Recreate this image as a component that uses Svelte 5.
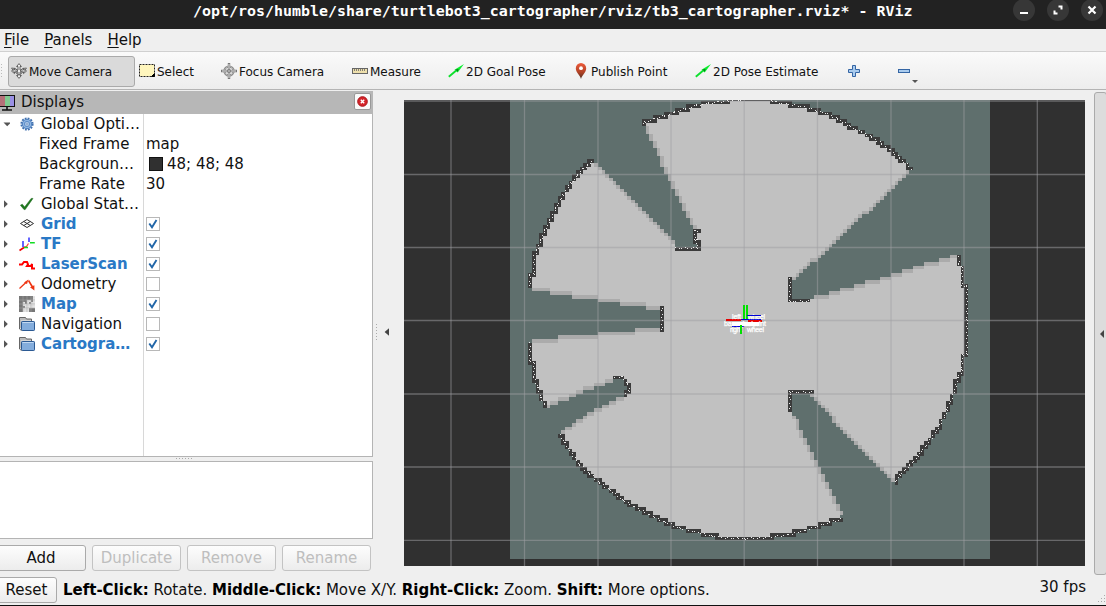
<script>
  const CELL = 3.664;
  const MX = 510, MB = 558.7, VX = 404, VY = 100;

  // Outline of the scanned area: alternating obstacle walls and open sight lines.
  const segs = [
    ['wall', [[644,124],[645,121.5],[654,119],[665,115.5],[675,112],[686,108.5],[697,105],[709,103],[718,102],[735,100],[750,99],[768,99.5],[776,102],[795,105],[812,109],[828,114],[838,119],[850,126],[862,132],[872,137],[882,144],[890,150],[900,158],[911,168.5]]],
    ['edge', [[908,171],[893,187],[862,214],[827,248],[795,279]]],
    ['wall', [[790,279],[790,300.5],[809,300.5]]],
    ['edge', [[815,298],[862,285],[905,272],[956,257]]],
    ['wall', [[958.5,257],[958.7,264],[962,267],[962,286],[966.5,286],[966.5,320],[966.5,354],[962.5,355],[962,370],[958,378],[953,395],[947,410],[940,425],[930,440],[918,456],[910,465],[900,475],[895,482]]],
    ['edge', [[892,480],[860,448],[812,396]]],
    ['wall', [[812,391.5],[790,391.5],[790,409]]],
    ['edge', [[794,416],[812,456],[841,514]]],
    ['wall', [[841,519],[830,522],[812,528],[795,533],[778,536],[760,538],[745,538.5],[728,538],[712,536],[695,531.5],[680,528],[665,522],[650,515],[635,507],[623,500],[610,490],[600,483],[590,474],[580,465],[570,451],[565,443],[560,435]]],
    ['edge', [[563,432],[590,415],[624,396]]],
    ['wall', [[626,394],[629,391],[628,384],[622,377],[615,377]]],
    ['edge', [[610,381],[583,391],[547,406]]],
    ['wall', [[545,405],[541,398],[538,388],[534,377],[534,363],[530,361],[530,343]]],
    ['edge', [[533,341],[590,336],[658,329]]],
    ['wall', [[662,330],[662,308]]],
    ['edge', [[658,308],[600,299],[532,289]]],
    ['wall', [[530,286],[530,275],[534,274],[534,256],[537,250],[541,240],[545,230],[550,220],[556,208],[563,195],[571,183],[578,175],[583,169],[588,165],[592,161]]],
    ['edge', [[595,163],[630,197],[673,243]]],
    ['wall', [[676,248],[697,248],[697,240],[695,240],[695,231],[697,231]]],
    ['edge', [[695,226],[671,178],[646,128]]],
  ];

  const outline = segs.flatMap((s) => s[1]);
  const cells = new Map();
  const dots = [];

  function inside(x, y) {
    let hit = false;
    for (let i = 0, j = outline.length - 1; i < outline.length; j = i++) {
      const [xi, yi] = outline[i], [xj, yj] = outline[j];
      if (yi > y !== yj > y && x < ((xj - xi) * (y - yi)) / (yj - yi) + xi) hit = !hit;
    }
    return hit;
  }
  for (let r = 0; r < 126; r++)
    for (let c = 0; c < 131; c++)
      if (inside(MX + (c + 0.5) * CELL, MB - (r + 0.5) * CELL)) cells.set(r * 200 + c, 'f');

  function trace(points, step, visit) {
    for (let i = 0; i < points.length - 1; i++) {
      const [x0, y0] = points[i], [x1, y1] = points[i + 1];
      const n = Math.max(1, Math.round(Math.hypot(x1 - x0, y1 - y0) / step));
      for (let k = 0; k <= n; k++) visit(x0 + ((x1 - x0) * k) / n, y0 + ((y1 - y0) * k) / n, k);
    }
  }
  const keyOf = (x, y) => Math.floor((MB - y) / CELL) * 200 + Math.floor((x - MX) / CELL);

  // One cell per column (or row) along the longer axis keeps the sight lines thin.
  function thin(points) {
    for (let i = 0; i < points.length - 1; i++) {
      const [ax, ay] = points[i], [bx, by] = points[i + 1];
      const c0 = (ax - MX) / CELL - 0.5, r0 = (MB - ay) / CELL - 0.5;
      const c1 = (bx - MX) / CELL - 0.5, r1 = (MB - by) / CELL - 0.5;
      const n = Math.max(Math.abs(Math.round(c1) - Math.round(c0)), Math.abs(Math.round(r1) - Math.round(r0)), 1);
      for (let k = 0; k <= n; k++)
        cells.set(Math.round(r0 + ((r1 - r0) * k) / n) * 200 + Math.round(c0 + ((c1 - c0) * k) / n), 'e');
    }
  }
  for (const [kind, pts] of segs) if (kind === 'edge') thin(pts);
  for (const [kind, pts] of segs)
    if (kind === 'wall') {
      trace(pts, 0.8, (x, y) => cells.set(keyOf(x, y), 'w'));
      trace(pts, 3, (x, y, k) => dots.push([Math.round(x) - VX + (k % 2 ? 0 : -1), Math.round(y) - VY - (k % 3 ? 0 : 1)]));
    }

  const paths = { f: '', e: '', w: '' };
  for (let r = 0; r < 126; r++) {
    let c = 0;
    while (c < 131) {
      const v = cells.get(r * 200 + c);
      let e = c + 1;
      while (e < 131 && cells.get(r * 200 + e) === v) e++;
      if (v) {
        const x0 = Math.round(MX + c * CELL) - VX, x1 = Math.round(MX + e * CELL) - VX;
        const y0 = Math.round(MB - (r + 1) * CELL) - VY, y1 = Math.round(MB - r * CELL) - VY;
        paths[v] += `M${x0} ${y0}H${x1}V${y1}H${x0}Z`;
      }
      c = e;
    }
  }
  const dotPath = dots.map(([x, y]) => `M${x} ${y}h1v1h-1z`).join('');
  const gx = [47, 120.5, 194, 267, 340.2, 413.5, 487, 560, 633.3];
  const gy = [1, 74.5, 147.5, 220.5, 294, 367, 440.3];

  const rows = [
    { icon: 'gear', name: 'Global Opti…', arrow: 'down' },
    { sub: true, name: 'Fixed Frame', value: 'map' },
    { sub: true, name: 'Backgroun…', value: '48; 48; 48', swatch: true },
    { sub: true, name: 'Frame Rate', value: '30' },
    { icon: 'check', name: 'Global Stat…', arrow: 'right' },
    { icon: 'grid', name: 'Grid', arrow: 'right', on: true, box: true },
    { icon: 'tf', name: 'TF', arrow: 'right', on: true, box: true },
    { icon: 'laser', name: 'LaserScan', arrow: 'right', on: true, box: true },
    { icon: 'odom', name: 'Odometry', arrow: 'right', box: true },
    { icon: 'map', name: 'Map', arrow: 'right', on: true, box: true },
    { icon: 'folder', name: 'Navigation', arrow: 'right', box: true },
    { icon: 'folder', name: 'Cartogra…', arrow: 'right', on: true, box: true },
  ];
  const tools = [
    { icon: 'move', label: 'Move Camera', w: 127, active: true },
    { icon: 'select', label: 'Select', w: 82 },
    { icon: 'focus', label: 'Focus Camera', w: 131 },
    { icon: 'measure', label: 'Measure', w: 96 },
    { icon: 'pose', label: '2D Goal Pose', w: 125 },
    { icon: 'pin', label: 'Publish Point', w: 122 },
    { icon: 'pose', label: '2D Pose Estimate', w: 149 },
  ];
  const mapLight = [
    '.......1', '.......1', '....11.1', '..1.1.11', '..111111', '...11111', '..111...', '..111...',
  ];
</script>

{#snippet glyph(name)}
  <svg class="ico" width="16" height="16" viewBox="0 0 16 16">
    {#if name === 'gear'}
      <circle cx="8" cy="8" r="5.6" fill="none" stroke="#3f6fae" stroke-width="2" stroke-dasharray="1.8 1.13" />
      <circle cx="8" cy="8" r="4.7" fill="#8db5e3" stroke="#4d7fbe" stroke-width="1" />
      <circle cx="8" cy="8" r="2.6" fill="#b9d2ee" stroke="#4d7fbe" stroke-width=".8" />
      <circle cx="8" cy="8" r="1" fill="#fff" stroke="#3f6fae" stroke-width=".6" />
    {:else if name === 'check'}
      <path d="M1.4 9.2 3.3 8.2 5.6 11 12.2 2.4 14 2.4 6.2 13.6H5Z" fill="#1d7a1d" stroke="#175e17" stroke-width=".5" />
    {:else if name === 'grid'}
      <path d="M1.5 7.5 8 3.5 14.5 7.5 8 11.5ZM4.8 5.5 11.3 9.5M11.3 5.5 4.8 9.5" fill="none" stroke="#333" stroke-width="1" />
    {:else if name === 'tf'}
      <path d="M.5 14.5 5 11.5" stroke="#e00" stroke-width="1.6" />
      <path d="M5 11 7.5 10.5 9.5 7.5" stroke="#f33" stroke-width="1.2" fill="none" />
      <path d="M4 5V11M10 1.5V6" stroke="#22f" stroke-width="1.4" />
      <path d="M5 11.5H9M11 6.8H15.8" stroke="#1d2" stroke-width="1.4" />
    {:else if name === 'laser'}
      <path d="M0 8.5H3L5 6H8L9 8.5 8 10H12L13 8V12.5H16" fill="none" stroke="#f00" stroke-width="2" />
    {:else if name === 'odom'}
      <path d="M.5 12.5 8 5.5" stroke="#e31" stroke-width="1.3" /><path d="M5 6.4 9.4 3.6 8 8Z" fill="#e31" />
      <path d="M9.5 4.5 13.5 11" stroke="#e31" stroke-width="1.6" /><path d="M11 11.2 15.4 9.2V14.4Z" fill="#e31" />
    {:else if name === 'map'}
      <rect width="16" height="16" fill="#777" />
      {#each mapLight as line, y}
        {#each line.split('') as m, x}
          {#if m === '1'}<rect x={x * 2} y={y * 2} width="2" height="2" fill="#f4f4f4" stroke="#bbb" stroke-width=".3" />{/if}
        {/each}
      {/each}
      <path d="M4 0V16M8 0V16M12 0V16M0 4H16M0 8H16M0 12H16" stroke="#aaa" stroke-width=".5" />
    {:else if name === 'folder'}
      <path d="M.5 13V1.5H6.5L7.5 3H12.5V6" fill="#bbb" stroke="#666" />
      <path d="M2 5H12" stroke="#eee" />
      <rect x="2.5" y="5.5" width="13" height="9" rx=".7" fill="#84addc" stroke="#2c5a93" />
      <path d="M3.5 6.5H14.5" stroke="#c1d8f1" /><path d="M.5 13 2.5 14.5" stroke="#666" />
    {:else if name === 'move'}
      <path d="M8 .6 10.4 3.5H9V7H12.5V5.4L15.5 8 12.5 10.6V9H9V12.5H10.4L8 15.4 5.6 12.5H7V9H3.5V10.6L.5 8 3.5 5.4V7H7V3.5H5.6Z" fill="#eee" stroke="#555" stroke-width=".9" />
      <path d="M.5 5 4.5 5.5 7 8 3.5 9.5ZM15.5 5 11.5 5.5 9 8 12.5 9.5ZM5 10 8 12 11 10" fill="none" stroke="#555" stroke-width=".8" />
    {:else if name === 'focus'}
      <circle cx="8" cy="8" r="4.6" fill="none" stroke="#777" stroke-width="2" />
      <circle cx="8" cy="8" r="4.6" fill="none" stroke="#eee" stroke-width=".6" />
      <path d="M8 0V16M0 8H16" stroke="#777" stroke-width="2.4" /><path d="M8 1V15M1 8H15" stroke="#eee" stroke-width=".9" />
      <circle cx="8" cy="8" r="1.5" fill="#bbb" stroke="#666" stroke-width=".7" />
    {:else if name === 'select'}
      <rect x=".5" y="1.5" width="15" height="12" fill="#fff6bd" stroke="#222" stroke-dasharray="2 1" /><path d="M15.5 10.5V13.5H12.5Z" fill="#000" stroke="#000" />
    {:else if name === 'measure'}
      <rect x=".5" y="5.5" width="15" height="5" fill="#eee0ad" stroke="#666" /><path d="M2.5 6V8M4.5 6V8M6.5 6V8M8.5 6V8M10.5 6V8M12.5 6V8" stroke="#666" stroke-width=".8" />
    {:else if name === 'pose'}
      <path d="M.8 13.8 8.5 7.2" stroke="#0de02d" stroke-width="1.9" /><path d="M6.5 6.8 16 1 9.7 9.5Z" fill="#0bee2e" /><path d="M7.5 6.6 9.7 8.8 10.6 6Z" fill="#087d1a" />
    {:else if name === 'pin'}
      <defs><linearGradient id="pin" x1="0" y1="0" x2="0" y2="1"><stop offset="0" stop-color="#ee5b3b" /><stop offset=".6" stop-color="#ae4125" /><stop offset="1" stop-color="#4b3023" /></linearGradient></defs>
      <path d="M8 16C7 12 2.8 9.5 2.8 5.2A5.2 5.2 0 0 1 13.2 5.2C13.2 9.5 9 12 8 16Z" fill="url(#pin)" /><circle cx="8" cy="5.2" r="1.9" fill="#fff" />
    {/if}
  </svg>
{/snippet}

<div class="window">
  <header>
    <span class="title">/opt/ros/humble/share/turtlebot3_cartographer/rviz/tb3_cartographer.rviz* - RViz</span>
    <div class="winbtns">
      <i><svg width="22" height="22"><path d="M7 14H15" stroke="#fff" stroke-width="2" /></svg></i>
      <i><svg width="22" height="22"><path d="M11.5 7.5H14.5V10.5M10.5 14.5H7.5V11.5" stroke="#fff" stroke-width="2" fill="none" /></svg></i>
      <i><svg width="22" height="22"><path d="M7.5 7.5 14.5 14.5M14.5 7.5 7.5 14.5" stroke="#fff" stroke-width="2.2" /></svg></i>
    </div>
  </header>
  <nav><span><u>F</u>ile</span><span><u>P</u>anels</span><span><u>H</u>elp</span></nav>
  <div class="toolbar">
    <span class="grip"></span>
    {#each tools as t}
      <div class="tool" class:active={t.active} style="width:{t.w}px">{@render glyph(t.icon)}<span>{t.label}</span></div>
    {/each}
    <div class="pm">
      <svg width="12" height="12" viewBox="0 0 12 12"><path d="M4.5 .5H7.5V4.5H11.5V7.5H7.5V11.5H4.5V7.5H.5V4.5H4.5Z" fill="#a9cbee" stroke="#3465a4" /></svg>
      <svg width="22" height="24" viewBox="0 0 22 24"><rect x=".5" y="10.5" width="11" height="3" fill="#a9cbee" stroke="#3465a4" /><path d="M14 21H20L17 24Z" fill="#555" /></svg>
    </div>
  </div>

  <main>
    <aside>
      <div class="dockhead">
        <svg width="16" height="18" viewBox="0 0 16 18"><rect x="-2" y="2" width="17" height="12" fill="#111" /><rect x="-1" y="3" width="6" height="10" fill="#b57078" /><rect x="5" y="3" width="5" height="10" fill="#80c990" /><rect x="10" y="3" width="4" height="10" fill="#9a90e4" /><path d="M7 14V17M2 17H12" stroke="#111" stroke-width="1.6" /></svg>
        <span>Displays</span>
        <b class="close"><svg width="15" height="15"><circle cx="7.5" cy="7.5" r="4.8" fill="#d5242a" stroke="#a91218" /><path d="M5.8 5.8 9.2 9.2M9.2 5.8 5.8 9.2" stroke="#fff" stroke-width="1.4" /></svg></b>
      </div>
      <div class="tree">
        {#each rows as r}
          <div class="row">
            <div class="key" class:sub={r.sub} class:on={r.on}>
              {#if !r.sub}
                <svg class="arr" width="8" height="10">
                  {#if r.arrow === 'down'}<path d="M1.5 3.5H9L5.2 7.3Z" fill="#555" />{:else}<path d="M2 1.2V8.8L5.8 5Z" fill="#555" />{/if}
                </svg>
                {@render glyph(r.icon)}
              {/if}
              <span>{r.name}</span>
            </div>
            <div class="val">
              {#if r.box}<svg width="14" height="14"><rect x=".5" y=".5" width="13" height="13" fill="#fff" stroke="#b8b8b8" />{#if r.on}<path d="M3.3 6.5 6 10.2 10.5 3" fill="none" stroke="#2166a8" stroke-width="1.9" />{/if}</svg>{/if}
              {#if r.swatch}<i class="sw"></i>{/if}
              {#if r.value}<span>{r.value}</span>{/if}
            </div>
          </div>
        {/each}
      </div>
      <div class="split"></div>
      <div class="desc"></div>
      <div class="btns">
        <button class="add">Add</button><button disabled>Duplicate</button><button disabled>Remove</button><button disabled>Rename</button>
      </div>
    </aside>
    <div class="handle"><svg width="18" height="18"><path d="M1.5 1V18" stroke="#aaa" stroke-dasharray="1 2" /><path d="M14 5.2V12.8L9.6 9Z" fill="#444" /></svg></div>
    <svg class="view" width="681" height="466" viewBox="0 0 681 466" shape-rendering="crispEdges">
      <rect width="681" height="466" fill="#303030" />
      <rect x="106" y="0" width="480" height="459" fill="#5f6f6d" />
      <path d={paths.f} fill="#c1c1c1" />
      <path d={paths.e} fill="#ababab" />
      <path d={paths.w} fill="#3b3b3b" />
      <g stroke="#a0a0a4" stroke-opacity=".5" stroke-width="1.3" shape-rendering="auto">
        {#each gx as x}<path d="M{x} 0V466" />{/each}
        {#each gy as y}<path d="M0 {y}H681" />{/each}
      </g>
      <path d={dotPath} fill="#ececec" />
      <g fill="none">
        <path d="M322 219.5H337M344 220.5H358" stroke="#e60000" stroke-width="2" />
        <path d="M343 215.5H357M337 219.5H357M328 226.5H340" stroke="#0000d8" stroke-width="1.5" />
        <path d="M340 205V219M343 205V219" stroke="#00e000" stroke-width="2" />
        <path d="M328 224H355" stroke="#fff" stroke-width="4" />
      </g>
      <g class="labels" shape-rendering="auto">
        <text x="328" y="219" textLength="9">left</text><text x="344" y="219" textLength="17">wheel</text>
        <text x="320" y="226" textLength="42">base_footprint</text>
        <text x="326" y="232" textLength="12">right</text><text x="343" y="232" textLength="17">wheel</text>
      </g>
      <path d="M343 215.5H357" stroke="#0000d8" stroke-width="1.2" />
      <path d="M336.5 225V234" stroke="#00e000" stroke-width="2" />
    </svg>
    <div class="right"><svg width="8" height="12"><path d="M6 2V10L2 6Z" fill="#444" /></svg></div>
  </main>

  <footer>
    <button class="reset">Reset</button>
    <p><b>Left-Click:</b> Rotate. <b>Middle-Click:</b> Move X/Y. <b>Right-Click:</b> Zoom. <b>Shift:</b> More options.</p>
    <span class="fps">30 fps</span>
    <svg class="size" width="8" height="8"><path d="M6 0h1v1h-1zM3 3h1v1h-1zM6 3h1v1h-1zM0 6h1v1h-1zM3 6h1v1h-1zM6 6h1v1h-1z" fill="#aaa" /></svg>
  </footer>
</div>

<style>
  .window { width: 1106px; height: 606px; box-sizing: border-box; display: flex; flex-direction: column; overflow: hidden; background: #efefef; color: #111; font: 15px/20px "DejaVu Sans", sans-serif; border-bottom: 1px solid #111; }
  svg { display: block; flex: none; }
  header { height: 29px; flex: none; display: flex; background: #222; color: #fff; box-sizing: border-box; padding-left: 193px; }
  .title { width: 820px; font: bold 14.95px/22px "DejaVu Sans Mono", monospace; white-space: pre; }
  .winbtns { display: flex; gap: 12px; }
  .winbtns i { width: 22px; height: 22px; margin-top: -1px; border-radius: 50%; background: #373737; }
  nav { height: 22px; flex: none; display: flex; gap: 15px; padding-left: 4px; line-height: 23px; border-bottom: 1px solid #d0d0d0; }
  nav u { text-underline-offset: 2px; }
  .toolbar { height: 36px; padding-top: 1px; flex: none; display: flex; align-items: center; background: linear-gradient(#fafafa, #ededed); border-bottom: 1px solid #b4b4b4; font-size: 12px; }
  .grip { width: 4px; height: 16px; margin-right: 4px; background: radial-gradient(circle, #bbb 30%, transparent 40%) 0 0 / 3px 3px; }
  .tool { height: 31px; display: flex; align-items: center; gap: 2px; padding-left: 3px; box-sizing: border-box; white-space: nowrap; border: 1px solid transparent; }
  .tool span { padding-top: 2px; }
  .tool.active { padding-left: 2px; background: #dadada; border-color: #aaa; border-radius: 3px; }
  .pm { display: flex; align-items: center; gap: 38px; padding-left: 8px; }
  main { height: 484px; flex: none; display: flex; }
  aside { width: 373px; flex: none; padding-top: 1px; }
  .dockhead { height: 23px; display: flex; align-items: center; background: #b7b7b7; }
  .dockhead svg { margin-top: -1px; }
  .dockhead span { margin: -2px 0 0 5px; flex: 1; }
  .close { width: 15px; height: 15px; margin: -3px 2px 0 0; background: #fafafa; border: 1px solid #999; border-radius: 2px; }
  .close svg { margin: 0; }
  .tree { height: 342px; background: linear-gradient(#d8d8d8, #d8d8d8) 143px 0 / 1px 100% no-repeat #fff; border: solid #b4b4b4; border-width: 0 1px 1px 0; }
  .row { height: 20px; display: flex; }
  .key { width: 146px; display: flex; align-items: center; white-space: nowrap; padding-left: 2px; box-sizing: border-box; }
  .arr { margin-right: 9px; }
  .key span { margin-left: 6px; }
  .key.sub span { margin-left: 37px; }
  .on { font-weight: bold; color: #2a79c6; }
  .val { display: flex; align-items: center; }
  .sw { width: 12px; height: 12px; background: #303030; border: 1px solid #111; margin: 0 4px 0 3px; }
  .split { height: 4px; }
  .split::before { content: ""; display: block; width: 17px; height: 1px; margin-left: 176px; background: repeating-linear-gradient(90deg, #aaa 0 1px, transparent 1px 3px); transform: translateY(1px); }
  .desc { height: 76px; background: #fff; border: solid #b4b4b4; border-width: 1px 1px 1px 0; }
  .btns { display: flex; gap: 6px; padding-top: 6px; }
  button { font: inherit; line-height: 22px; height: 26px; width: 89px; padding: 0; box-sizing: border-box; border: 1px solid #aaa; border-radius: 3px; background: linear-gradient(#fdfdfd, #ececec); color: #111; white-space: nowrap; }
  button:disabled { color: #bebebe; border-color: #c3c3c3; }
  .add { width: 90px; margin-left: -4px; }
  .handle { width: 31px; flex: none; display: flex; align-items: center; }
  .handle svg { margin-left: 2px; }
  .view { margin-top: 10px; }
  .labels { font: 7px "Liberation Sans", sans-serif; fill: #fff; stroke: #fff; stroke-width: .25; }
  .right { margin: 2px 0 0 9px; width: 20px; height: 481px; border: 1px solid #aaa; border-radius: 3px; background: #dcdcdc; display: flex; align-items: center; }
  .right svg { margin-left: 3px; }
  footer { height: 31px; flex: none; display: flex; align-items: center; }
  .reset { width: 61px; margin-left: -4px; height: 26px; padding-top: 1px; }
  p { margin: 0 0 0 6px; flex: 1; white-space: nowrap; letter-spacing: -.01px; }
  b { color: #000; }
  .fps { margin: -6px 12px 0 0; }
  .size { align-self: flex-end; margin: 0 0 2px 0; }
</style>
